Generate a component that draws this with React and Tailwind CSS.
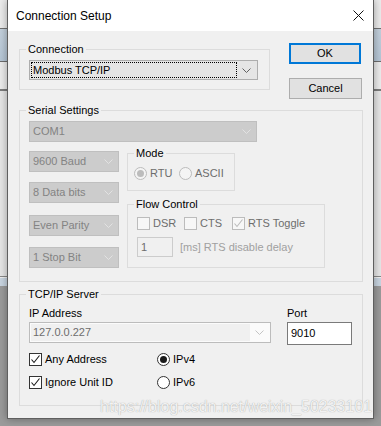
import React from "react";

function Chevron({ color = "#606060" }) {
  return (
    <svg width="9" height="5" viewBox="0 0 9 5" fill="none">
      <polyline points="0.5,0.5 4.5,4.5 8.5,0.5" stroke={color} strokeWidth="1" />
    </svg>
  );
}

function CheckMark({ color = "#000" }) {
  return (
    <svg width="11" height="11" viewBox="0 0 11 11" fill="none">
      <polyline points="1.5,5.5 4,8.5 9.5,1.5" stroke={color} strokeWidth="1.1" />
    </svg>
  );
}

function Group({ label, className = "", children }) {
  return (
    <fieldset className={`border border-[#dcdcdc] pl-[9px] ${className}`}>
      <legend className="ml-[-3px] px-[2px] text-[11px] leading-[13px] text-black">
        {label}
      </legend>
      {children}
    </fieldset>
  );
}

function DisabledSelect({ value, width }) {
  return (
    <div
      className={`flex h-[21px] items-center border border-[#bfbfbf] bg-[#cccccc] pl-[3px] text-[11px] text-[#838383] ${width}`}
    >
      <span className="flex-1">{value}</span>
      <div className="flex w-[19px] justify-center">
        <Chevron color="#e2e2e2" />
      </div>
    </div>
  );
}

function Radio({ label, checked, disabled, className = "" }) {
  return (
    <div className={`flex h-[13px] items-center ${className}`}>
      <div
        className={`flex h-[13px] w-[13px] items-center justify-center rounded-full border ${
          disabled ? "border-[#bcbcbc] bg-[#f4f4f4]" : "border-[#333333] bg-white"
        }`}
      >
        {checked && (
          <div
            className={`h-[7px] w-[7px] rounded-full ${
              disabled ? "bg-[#bcbcbc]" : "bg-[#1a1a1a]"
            }`}
          />
        )}
      </div>
      <span
        className={`ml-[3px] text-[11px] leading-[13px] ${
          disabled ? "text-[#6d6d6d]" : "text-black"
        }`}
      >
        {label}
      </span>
    </div>
  );
}

function Check({ label, checked, disabled, className = "" }) {
  return (
    <div className={`flex h-[13px] items-center ${className}`}>
      <div
        className={`flex h-[13px] w-[13px] items-center justify-center border ${
          disabled ? "border-[#bcbcbc] bg-[#f7f7f7]" : "border-[#333333] bg-white"
        }`}
      >
        {checked && <CheckMark color={disabled ? "#bcbcbc" : "#1a1a1a"} />}
      </div>
      <span
        className={`ml-[3px] text-[11px] leading-[13px] ${
          disabled ? "text-[#6d6d6d]" : "text-black"
        }`}
      >
        {label}
      </span>
    </div>
  );
}

export default function App() {
  return (
    <div className="relative h-[426px] w-[381px] overflow-hidden font-['Liberation_Sans',Arial,sans-serif]">
      {/* window behind the dialog */}
      <div className="flex h-full flex-col">
        <div className="h-[28px] bg-[#ebebeb]" />
        <div className="h-[1px] bg-[#707070]" />
        <div className="h-[32px] bg-gradient-to-b from-[#c3d0dc] to-[#b5c6d6]" />
        <div className="h-[1px] bg-[#6d6d6d]" />
        <div className="h-[27px] bg-[#ececec]" />
        <div className="h-[2px] bg-[#7c7c7c]" />
        <div className="h-[185px] bg-[#e6e6e6]" />
        <div className="h-[1px] bg-[#888888]" />
        <div className="h-[1px] bg-[#f0f0f0]" />
        <div className="h-[8px] bg-[#c9d5e1]" />
        <div className="flex-1 bg-[#9b9b9b]" />
      </div>

      {/* dialog window */}
      <div className="absolute left-[7px] top-0 flex h-[419px] w-[367px] flex-col border-x border-b border-[#5f5f5f] bg-[#f0f0f0] shadow-[0_0_8px_rgba(0,0,0,0.35)]">
        <div className="flex h-[31px] items-center justify-between bg-white pl-[8px] pr-[9px]">
          <span className="text-[12px] text-black">Connection Setup</span>
          <svg width="11" height="11" viewBox="0 0 11 11" fill="none">
            <line x1="0.5" y1="0.5" x2="10.5" y2="10.5" stroke="#111" strokeWidth="1" />
            <line x1="10.5" y1="0.5" x2="0.5" y2="10.5" stroke="#111" strokeWidth="1" />
          </svg>
        </div>

        <div className="flex flex-1 flex-col pl-[11px] pr-[10px]">
          {/* connection row */}
          <div className="mt-[12px] flex items-start">
            <Group label="Connection" className="w-[251px] pb-[9px]">
              <div className="mt-[4px] flex h-[20px] w-[229px] items-center border border-[#adadad] bg-[#e5e5e5] p-[1px]">
                <div className="flex h-full flex-1 items-center border border-dotted border-black pl-[1px] text-[11px] text-black">
                  Modbus TCP/IP
                </div>
                <div className="flex w-[19px] justify-center">
                  <Chevron />
                </div>
              </div>
            </Group>
            <div className="ml-[19px] flex flex-col">
              <button className="flex h-[21px] w-[72px] items-center justify-center border-2 border-[#0078d7] bg-[#e1e1e1] text-[11px] text-black">
                OK
              </button>
              <button className="mt-[14px] flex h-[21px] w-[73px] items-center justify-center border border-[#adadad] bg-[#e1e1e1] text-[11px] text-black">
                Cancel
              </button>
            </div>
          </div>

          {/* serial settings */}
          <Group label="Serial Settings" className="mt-[5px] w-[344px] pb-[13px]">
            <div className="mt-[4px]">
              <DisabledSelect value="COM1" width="w-[228px]" />
            </div>
            <div className="mt-[5px] flex items-start">
              <div className="mt-[4px] flex w-[90px] flex-col">
                <DisabledSelect value="9600 Baud" width="w-[90px]" />
                <div className="mt-[10px]">
                  <DisabledSelect value="8 Data bits" width="w-[90px]" />
                </div>
                <div className="mt-[12px]">
                  <DisabledSelect value="Even Parity" width="w-[90px]" />
                </div>
                <div className="mt-[11px]">
                  <DisabledSelect value="1 Stop Bit" width="w-[90px]" />
                </div>
              </div>
              <div className="ml-[8px] flex flex-col">
                <fieldset className="w-[108px] border border-[#dcdcdc] pb-[10px] pl-[6px]">
                  <legend className="px-[2px] text-[11px] leading-[13px] text-black">
                    Mode
                  </legend>
                  <div className="mt-[7px] flex">
                    <Radio label="RTU" checked disabled className="w-[45px]" />
                    <Radio label="ASCII" disabled />
                  </div>
                </fieldset>
                <fieldset className="mt-[7px] w-[198px] border border-[#dcdcdc] pb-[10px] pl-[9px]">
                  <legend className="ml-[-3px] px-[2px] text-[11px] leading-[13px] text-black">
                    Flow Control
                  </legend>
                  <div className="mt-[6px] flex">
                    <Check label="DSR" disabled className="w-[47px]" />
                    <Check label="CTS" disabled className="w-[48px]" />
                    <Check label="RTS Toggle" checked disabled />
                  </div>
                  <div className="mt-[7px] flex items-center">
                    <div className="flex h-[20px] w-[36px] items-start border border-[#cccccc] bg-[#f0f0f0] pl-[3px] pt-[1px] text-[11px] text-[#6d6d6d]">
                      1
                    </div>
                    <span className="ml-[7px] text-[11px] text-[#a0a0a0]">
                      [ms] RTS disable delay
                    </span>
                  </div>
                </fieldset>
              </div>
            </div>
          </Group>

          {/* tcp/ip server */}
          <Group label="TCP/IP Server" className="mt-[6px] w-[344px] pb-[16px]">
            <div className="mt-[6px] flex items-start">
              <div className="flex flex-col">
                <span className="text-[11px] leading-[13px] text-black">IP Address</span>
                <div className="mt-[2px] flex h-[21px] w-[242px] items-center border border-[#bcbcbc] bg-[#fbfbfb] p-[1px]">
                  <div className="flex h-full flex-1 items-center bg-[#f0f0f0] pl-[2px] text-[11px] text-[#6d6d6d]">
                    127.0.0.227
                  </div>
                  <div className="flex w-[19px] justify-center">
                    <Chevron color="#c4c4c4" />
                  </div>
                </div>
              </div>
              <div className="ml-[16px] flex flex-col">
                <span className="text-[11px] leading-[13px] text-black">Port</span>
                <div className="mt-[2px] flex h-[23px] w-[65px] items-center border border-[#7a7a7a] bg-white pl-[3px] text-[11px] text-black">
                  9010
                </div>
              </div>
            </div>
            <div className="mt-[8px] flex">
              <div className="flex w-[128px] flex-col gap-[10px]">
                <Check label="Any Address" checked />
                <Check label="Ignore Unit ID" checked />
              </div>
              <div className="flex flex-col gap-[10px]">
                <Radio label="IPv4" checked />
                <Radio label="IPv6" />
              </div>
            </div>
          </Group>
        </div>
      </div>

      {/* watermark */}
      <span className="absolute left-[100px] top-[398px] text-[16px] leading-[18px] text-[#f2f2f2] [text-shadow:0_0_1px_#9a9a9a]">
        https://blog.csdn.net/weixin_50233101
      </span>
    </div>
  );
}
